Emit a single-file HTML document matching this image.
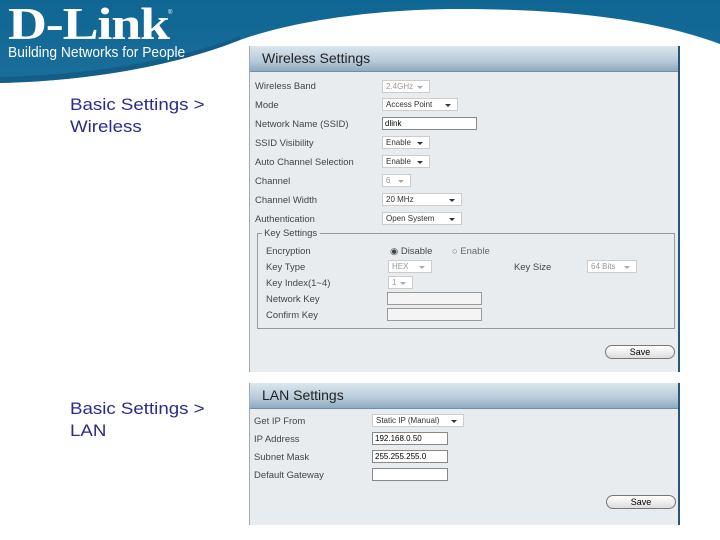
<!DOCTYPE html>
<html><head><meta charset="utf-8"><style>
*{margin:0;padding:0;box-sizing:border-box}
body{width:720px;height:540px;background:#fff;position:relative;overflow:hidden;font-family:"Liberation Sans",sans-serif}
.a{position:absolute}
.nav{color:#2b2b8c;font-size:17px;line-height:22px;left:70px;transform:scaleX(1.1);transform-origin:left}
.panel{position:absolute;background:#e8ecef;border-right:2px solid #2a5478;border-left:1px solid #9ab}
.hdr{position:absolute;left:0;right:0;top:0;height:26px;background:linear-gradient(#dbe6ee,#b7cad8 60%,#8eaac0);font-size:14px;color:#222;padding:4px 12px;border-bottom:1px solid #6f8fa8}
.l{position:absolute;font-size:9px;color:#444;transform:scaleX(1.05);transform-origin:left}
.s{position:absolute;height:13px;background:#fff;border:1px solid #ccc;font-size:8px;color:#333;padding:1px 3px;line-height:10px}
.s:after{content:"";position:absolute;right:6px;top:5px;border:3px solid transparent;border-top:3px solid #333}
.s.d{color:#999}.s.d:after{border-top-color:#aaa}
.i{position:absolute;height:13px;background:#fff;border:1px solid #888;font-size:8px;padding:1px 2px;line-height:10px}
.i.g{background:#f4f4f4;border-color:#999}
.btn{position:absolute;width:70px;height:14px;border:1px solid #777;border-radius:7px;background:linear-gradient(#fff,#ddd);font-size:9px;text-align:center;line-height:12px}
</style></head><body>
<svg class="a" style="left:0;top:0" width="720" height="90">
<defs><linearGradient id="g" x1="0" y1="0" x2="0" y2="1"><stop offset="0" stop-color="#0f6693"/><stop offset="1" stop-color="#1a6e9a"/></linearGradient></defs>
<path d="M0,0H720V44C660,22 580,9 460,9C370,9 290,22 240,40C200,56 120,80 0,83Z" fill="url(#g)"/>
<path d="M240,40C200,56 120,80 0,83V77C120,74 200,52 240,36Z" fill="#0b4f78" opacity=".5"/>
</svg>
<div class="a" style="left:8px;top:-1px;color:#fff;font-family:'Liberation Serif',serif;font-weight:bold;font-size:45px;line-height:50px;letter-spacing:-1px;transform:scaleX(1.2);transform-origin:left">D-Link</div>
<div class="a" style="left:168px;top:10px;color:#fff;font-size:6px">®</div>
<div class="a" style="left:8px;top:44px;color:#fff;font-size:15px;transform:scaleX(.92);transform-origin:left">Building Networks for People</div>
<div class="a nav" style="top:94px">Basic Settings &gt;<br>Wireless</div>
<div class="a nav" style="top:398px">Basic Settings &gt;<br>LAN</div>

<div class="panel" style="left:249px;top:46px;width:431px;height:326px">
<div class="hdr">Wireless Settings</div>
<div class="l" style="left:5px;top:35px">Wireless Band</div><div class="s d" style="left:132px;top:34px;width:48px">2.4GHz</div>
<div class="l" style="left:5px;top:54px">Mode</div><div class="s" style="left:132px;top:52px;width:76px">Access Point</div>
<div class="l" style="left:5px;top:73px">Network Name (SSID)</div><div class="i" style="left:132px;top:71px;width:95px">dlink</div>
<div class="l" style="left:5px;top:92px">SSID Visibility</div><div class="s" style="left:132px;top:90px;width:48px">Enable</div>
<div class="l" style="left:5px;top:111px">Auto Channel Selection</div><div class="s" style="left:132px;top:109px;width:48px">Enable</div>
<div class="l" style="left:5px;top:130px">Channel</div><div class="s d" style="left:132px;top:128px;width:29px">6</div>
<div class="l" style="left:5px;top:149px">Channel Width</div><div class="s" style="left:132px;top:147px;width:80px">20 MHz</div>
<div class="l" style="left:5px;top:168px">Authentication</div><div class="s" style="left:132px;top:166px;width:80px">Open System</div>
<div class="a" style="left:7px;top:187px;width:418px;height:96px;border:1px solid #999"></div>
<div class="l" style="left:12px;top:182px;background:#e8ecef;padding:0 2px">Key Settings</div>
<div class="l" style="left:16px;top:200px">Encryption</div>
<div class="l" style="left:140px;top:200px">◉ Disable</div><div class="l" style="left:202px;top:200px;color:#666">○ Enable</div>
<div class="l" style="left:16px;top:216px">Key Type</div><div class="s d" style="left:138px;top:214px;width:44px">HEX</div>
<div class="l" style="left:264px;top:216px">Key Size</div><div class="s d" style="left:337px;top:214px;width:50px">64 Bits</div>
<div class="l" style="left:16px;top:232px">Key Index(1~4)</div><div class="s d" style="left:138px;top:230px;width:25px">1</div>
<div class="l" style="left:16px;top:248px">Network Key</div><div class="i g" style="left:137px;top:246px;width:95px"></div>
<div class="l" style="left:16px;top:264px">Confirm Key</div><div class="i g" style="left:137px;top:262px;width:95px"></div>
<div class="btn" style="left:355px;top:299px">Save</div>
</div>

<div class="panel" style="left:249px;top:383px;width:431px;height:142px">
<div class="hdr">LAN Settings</div>
<div class="l" style="left:4px;top:33px">Get IP From</div><div class="s" style="left:122px;top:31px;width:92px">Static IP (Manual)</div>
<div class="l" style="left:4px;top:51px">IP Address</div><div class="i" style="left:122px;top:49px;width:76px">192.168.0.50</div>
<div class="l" style="left:4px;top:69px">Subnet Mask</div><div class="i" style="left:122px;top:67px;width:76px">255.255.255.0</div>
<div class="l" style="left:4px;top:87px">Default Gateway</div><div class="i" style="left:122px;top:85px;width:76px"></div>
<div class="btn" style="left:356px;top:112px">Save</div>
</div>
</body></html>
